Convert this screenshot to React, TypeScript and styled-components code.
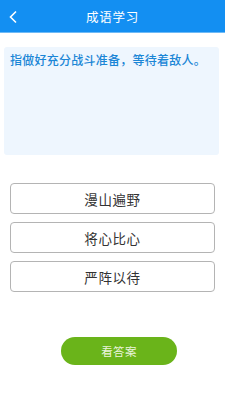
import React from "react";
import styled, { createGlobalStyle } from "styled-components";

const GlobalStyle = createGlobalStyle`
  html, body {
    margin: 0;
    padding: 0;
    background: #ffffff;
    font-family: "Noto Sans CJK SC", "Noto Sans", sans-serif;
  }
`;

const Page = styled.div`
  width: 225px;
  height: 400px;
  display: flex;
  flex-direction: column;
  background: #ffffff;
`;

const Header = styled.div`
  height: 32px;
  background: #138ff2;
  border-bottom: 1px solid #6fbaf6;
  display: flex;
  align-items: center;
  justify-content: center;
  position: relative;
  color: #ffffff;
  font-size: 12.5px;
  letter-spacing: 0.8px;
`;

const Back = styled.div`
  position: absolute;
  left: 8px;
  top: 9px;
  width: 10px;
  height: 14px;
`;

const Card = styled.div`
  margin: 14px 6px 0 4px;
  height: 108px;
  background: #eef6fe;
  border-radius: 3px;
  padding: 4px 6px;
  box-sizing: border-box;
  color: #1b86d6;
  font-size: 12px;
  font-weight: 500;
  letter-spacing: 0.25px;
  line-height: 17px;
`;

const Options = styled.div`
  margin: 28px 10px 0 10px;
  display: flex;
  flex-direction: column;
  gap: 8px;
`;

const Option = styled.div`
  height: 31px;
  box-sizing: border-box;
  border: 1px solid #b4b4b4;
  border-radius: 4px;
  display: flex;
  align-items: center;
  justify-content: center;
  color: #333333;
  font-size: 13.5px;
  letter-spacing: 0.6px;
`;

const Footer = styled.div`
  margin-top: 45px;
  display: flex;
  justify-content: center;
`;

const AnswerButton = styled.div`
  width: 116px;
  height: 28px;
  margin-left: 13px;
  border-radius: 14px;
  background: #6ab41a;
  color: #eaf5dc;
  display: flex;
  align-items: center;
  justify-content: center;
  font-size: 11.5px;
  letter-spacing: 0.4px;
`;

const options = ["漫山遍野", "将心比心", "严阵以待"];

export default function App() {
  return (
    <Page>
      <GlobalStyle />
      <Header>
        <Back>
          <svg width="10" height="14" viewBox="0 0 10 14">
            <path d="M8 1.5 L2.5 7 L8 12.5" stroke="#ffffff" strokeWidth="1.6" fill="none" />
          </svg>
        </Back>
        成语学习
      </Header>
      <Card>指做好充分战斗准备，等待着敌人。</Card>
      <Options>
        {options.map((o) => (
          <Option key={o}>{o}</Option>
        ))}
      </Options>
      <Footer>
        <AnswerButton>看答案</AnswerButton>
      </Footer>
    </Page>
  );
}
